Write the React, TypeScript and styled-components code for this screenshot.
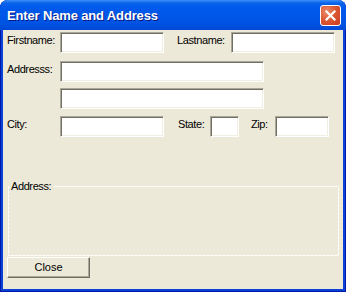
import React from "react";
import styled, { createGlobalStyle } from "styled-components";

const Global = createGlobalStyle`
  html, body { margin: 0; padding: 0; background: #ffffff; }
  * { box-sizing: border-box; }
`;

const Window = styled.div`
  width: 346px;
  height: 292px;
  display: flex;
  flex-direction: column;
  border-radius: 8px 8px 0 0;
  background: #0842d6;
  box-shadow: inset 1px 0 #0019a8, inset -1px 0 #0019a8, inset 0 -1px #0019a8;
  overflow: hidden;
`;

const TitleBar = styled.div`
  height: 30px;
  flex: none;
  display: flex;
  align-items: flex-start;
  padding: 0 5px 0 7px;
  background: linear-gradient(
    180deg,
    #3d8ff7 0px,
    #0a64ea 3px,
    #005aeb 7px,
    #0057e8 50%,
    #0053e2 80%,
    #0048d6 100%
  );
`;

const Title = styled.div`
  margin-top: 8px;
  font-family: "Liberation Sans", Arial, sans-serif;
  font-weight: bold;
  font-size: 13px;
  line-height: 15px;
  letter-spacing: -0.15px;
  color: #ffffff;
  text-shadow: 1px 1px #0a1883;
  white-space: nowrap;
`;

const CloseBox = styled.div`
  margin-left: auto;
  margin-top: 5px;
  width: 21px;
  height: 21px;
  border: 1px solid #ffffff;
  border-radius: 3px;
  background: radial-gradient(circle at 30% 30%, #ec8a6a 0%, #dc5a36 45%, #c8381a 100%);
  display: flex;
  align-items: center;
  justify-content: center;
`;

const Client = styled.div`
  flex: 1;
  margin: 0 3px 3px;
  background: #ece9d8;
  padding: 0 0 0 4px;
  display: flex;
  flex-direction: column;
  font-family: "Liberation Sans", Arial, sans-serif;
  font-size: 11px;
  letter-spacing: -0.4px;
  color: #000000;
`;

const Row = styled.div<{ $top: number }>`
  display: flex;
  align-items: flex-start;
  margin-top: ${(p) => p.$top}px;
  height: 21px;
`;

const Label = styled.label<{ $w: number; $ml?: number }>`
  width: ${(p) => p.$w}px;
  margin-left: ${(p) => p.$ml ?? 0}px;
  padding-top: 2px;
  line-height: 13px;
  white-space: nowrap;
  flex: none;
`;

const Field = styled.input<{ $w: number }>`
  width: ${(p) => p.$w}px;
  height: 21px;
  flex: none;
  margin: 0;
  padding: 0 3px;
  background: #ffffff;
  border: 1px solid;
  border-color: #aca899 #ffffff #ffffff #aca899;
  box-shadow: inset 1px 1px #716f64, inset -1px -1px #f1efe2;
  border-radius: 0;
  outline: none;
  font: inherit;
`;

const Group = styled.fieldset`
  margin: 43px 0 0 1px;
  width: 331px;
  height: 76px;
  padding: 0;
  border: 1px solid #ffffff;
  border-image: repeating-linear-gradient(
      45deg,
      #ffffff 0 2.12px,
      rgba(255, 255, 255, 0.25) 2.12px 2.828px
    )
    1;
`;

const Legend = styled.legend`
  margin-left: 1px;
  padding: 0 2px 0 1px;
  line-height: 13px;
`;

const Button = styled.button`
  margin: 1px 0 0 0;
  width: 83px;
  height: 21px;
  padding: 0;
  background: #ece9d8;
  border: 1px solid;
  border-color: #ffffff #716f64 #716f64 #ffffff;
  box-shadow: inset -1px -1px #aca899;
  border-radius: 0;
  font: inherit;
  color: #000000;
  line-height: 13px;
`;

export default function App() {
  return (
    <>
      <Global />
      <Window>
        <TitleBar>
          <Title>Enter Name and Address</Title>
          <CloseBox>
            <svg width="11" height="11" viewBox="0 0 11 11">
              <path d="M1.5 1.5 L9.5 9.5 M9.5 1.5 L1.5 9.5" stroke="#ffffff" strokeWidth="2.2" strokeLinecap="square" />
            </svg>
          </CloseBox>
        </TitleBar>
        <Client>
          <Row $top={2}>
            <Label $w={53}>Firstname:</Label>
            <Field $w={104} />
            <Label $w={54} $ml={13}>Lastname:</Label>
            <Field $w={104} />
          </Row>
          <Row $top={8}>
            <Label $w={53}>Addresss:</Label>
            <Field $w={204} />
          </Row>
          <Row $top={6}>
            <Label $w={53} />
            <Field $w={204} />
          </Row>
          <Row $top={7}>
            <Label $w={53}>City:</Label>
            <Field $w={104} />
            <Label $w={32} $ml={14}>State:</Label>
            <Field $w={29} />
            <Label $w={24} $ml={12}>Zip:</Label>
            <Field $w={54} />
          </Row>
          <Group>
            <Legend>Address:</Legend>
          </Group>
          <Button>Close</Button>
        </Client>
      </Window>
    </>
  );
}
